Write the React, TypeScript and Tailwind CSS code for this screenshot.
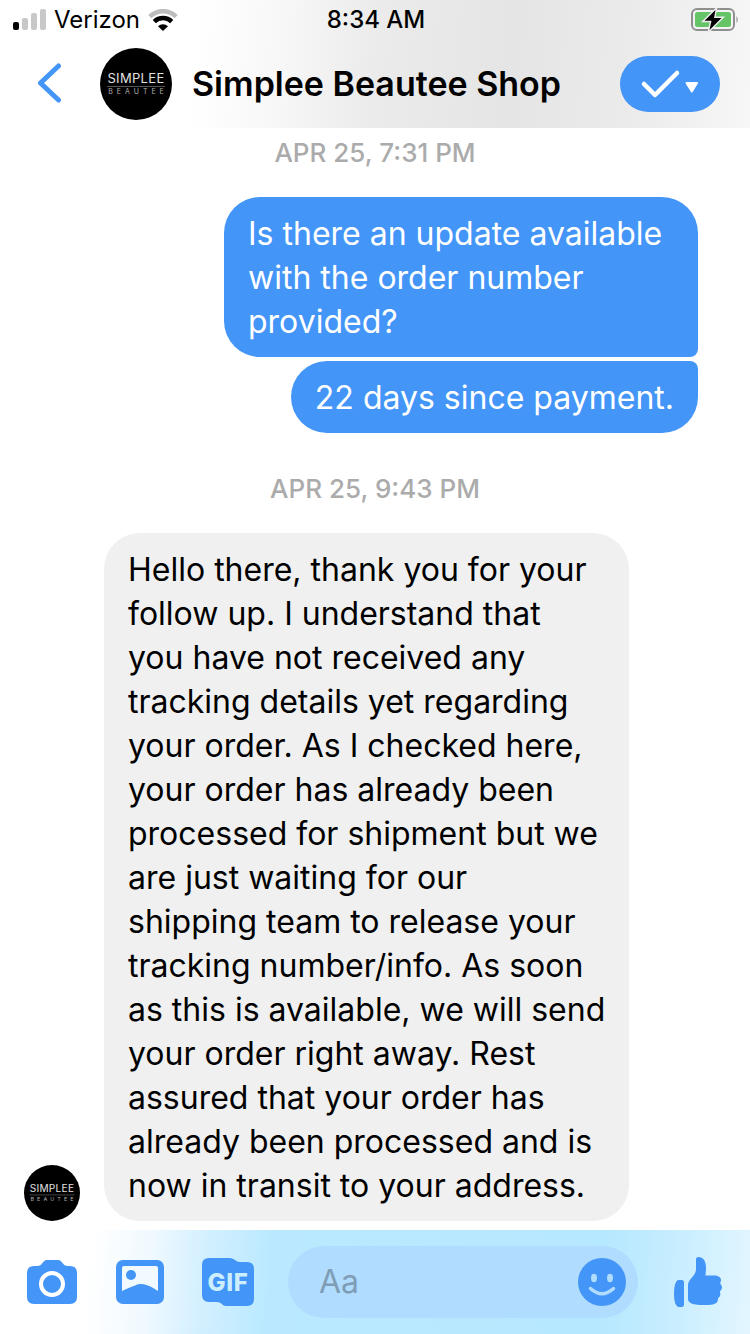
import { clsx } from "clsx";

function Avatar({ className }: { className: string }) {
  return (
    <svg viewBox="0 0 72 72" className={clsx("shrink-0", className)} role="img" aria-label="Simplee Beautee">
      <circle cx="36" cy="36" r="36" fill="#000" />
      <text x="36" y="35" textAnchor="middle" fill="#e0e0e0" fontSize="13" className="font-['Inter',sans-serif] tracking-wide">SIMPLEE</text>
      <path d="M7 38.5H65" stroke="#555" strokeWidth="1" />
      <text x="38" y="46" textAnchor="middle" fill="#b0b0b0" fontSize="7" className="font-['Inter',sans-serif] tracking-[4px]">BEAUTEE</text>
    </svg>
  );
}

function Signal() {
  return (
    <svg viewBox="0 0 33 22" className="h-[22px] w-[33px]" aria-hidden="true">
      <rect x="0" y="13" width="6" height="8" rx="2" fill="#000" />
      <rect x="9" y="9" width="6" height="12" rx="2" fill="#c8c8c8" />
      <rect x="18" y="4" width="6" height="17" rx="2" fill="#c8c8c8" />
      <rect x="27" y="0" width="6" height="21" rx="2" fill="#c8c8c8" />
    </svg>
  );
}

function Wifi() {
  return (
    <svg viewBox="0 0 30 22" className="h-[22px] w-[30px]" fill="none" aria-hidden="true">
      <path d="M1.8 7.6A19 19 0 0 1 28.2 7.6" stroke="#bdbdbd" strokeWidth="4.4" />
      <path d="M6.3 12.6A12.4 12.4 0 0 1 23.7 12.6" stroke="#000" strokeWidth="4.4" />
      <path d="M10 17.2a7.2 7.2 0 0 1 10 0L15 22z" fill="#000" />
    </svg>
  );
}

function Battery() {
  return (
    <svg viewBox="0 0 48 24" className="h-6 w-12" fill="none" aria-hidden="true">
      <rect x="1" y="1" width="42" height="21" rx="5" stroke="#8f8f8f" strokeWidth="2" />
      <rect x="4" y="4" width="36" height="15" rx="2.5" fill="#65c466" />
      <path d="M45.5 8q2.5 3.5 0 7z" fill="#8f8f8f" />
      <path d="M24.5 2 13.5 12.7h7L18.5 22 30.5 10h-7.5z" fill="#000" stroke="#ececec" strokeWidth="3" paintOrder="stroke" />
    </svg>
  );
}

function Stamp({ children }: { children: string }) {
  return <time className="block text-center text-[26px] leading-[32px] font-medium text-[#ababab]">{children}</time>;
}

const iconButton = "shrink-0 cursor-pointer text-[#4395f7]";
const bubble = "rounded-[36px] px-6 pt-[15px] pb-[13px] whitespace-pre";

const question = ["Is there an update available", "with the order number", "provided?"];

const reply = [
  "Hello there, thank you for your",
  "follow up. I understand that",
  "you have not received any",
  "tracking details yet regarding",
  "your order. As I checked here,",
  "your order has already been",
  "processed for shipment but we",
  "are just waiting for our",
  "shipping team to release your",
  "tracking number/info. As soon",
  "as this is available, we will send",
  "your order right away. Rest",
  "assured that your order has",
  "already been processed and is",
  "now in transit to your address.",
];

export default function App() {
  return (
    <div className="flex min-h-screen flex-col bg-white font-['Inter',sans-serif] text-black">
      <header className="bg-[linear-gradient(95deg,#fff_26%,#f7f7f7_38%,#ebebeb_50%,#e5e5e6_68%,#ebebeb_84%,#f7f7f7)]">
        <div className="grid h-10 grid-cols-3 items-center pr-[11px] pl-[13px] text-2xl">
          <div className="flex items-center gap-2">
            <Signal />
            <span>Verizon</span>
            <Wifi />
          </div>
          <span className="text-center font-medium">8:34 AM</span>
          <div className="flex justify-end">
            <Battery />
          </div>
        </div>

        <div className="flex h-[88px] items-center pr-[30px] pl-9">
          <button type="button" aria-label="Back" className={iconButton}>
            <svg viewBox="0 0 28 42" className="h-[42px] w-7" fill="none" stroke="currentColor" strokeWidth="5" strokeLinecap="round" strokeLinejoin="round">
              <path d="M22.5 3 4.5 20 22.5 37" />
            </svg>
          </button>
          <Avatar className="ml-9 size-[72px]" />
          <h1 className="ml-5 flex-1 text-[34px] leading-[44px] font-semibold whitespace-nowrap">Simplee Beautee Shop</h1>
          <button type="button" aria-label="Mark as done" className="h-14 w-[100px] shrink-0 cursor-pointer rounded-full bg-[#4395f7]">
            <svg viewBox="0 0 100 56" className="h-14 w-[100px]" fill="none">
              <path d="M24 28 35 39 57 17" stroke="#fff" strokeWidth="4.5" strokeLinecap="round" strokeLinejoin="round" />
              <path d="M66.5 27H77L71.8 35.5z" fill="#fff" stroke="#fff" strokeWidth="2" strokeLinejoin="round" />
            </svg>
          </button>
        </div>
      </header>

      <main className="flex flex-1 flex-col py-[9px] text-[32px] leading-[44px]">
        <Stamp>APR 25, 7:31 PM</Stamp>

        <div className="mt-7 flex flex-col items-end gap-1 pr-[52px] text-white">
          <p className={clsx(bubble, "w-[474px] rounded-br-lg bg-[#4395f7]")}>{question.join("\n")}</p>
          <p className={clsx(bubble, "rounded-tr-lg bg-[#4395f7]")}>22 days since payment.</p>
        </div>

        <div className="mt-10">
          <Stamp>APR 25, 9:43 PM</Stamp>
        </div>

        <div className="mt-7 flex items-end gap-6 pl-6">
          <Avatar className="size-14" />
          <p className={clsx(bubble, "w-[525px] bg-[#f0f0f0]")}>{reply.join("\n")}</p>
        </div>
      </main>

      <footer className="flex h-[104px] items-center bg-[linear-gradient(95deg,#fff_12%,#f0f9ff_20%,#d4f0ff_27%,#bae9ff_36%,#b6e8ff_80%,#c9eeff_90%,#e3f6ff)] pr-7 pl-[27px]">
        <button type="button" aria-label="Camera" className={iconButton}>
          <svg viewBox="0 0 50 44" className="h-11 w-[50px]" fill="currentColor">
            <path d="M7 6h3c3 0 4-1 5.5-3S18 0 20 0h11c2 0 3 1 4.5 3S38 6 41 6h2q7 0 7 7v24q0 7-7 7H7q-7 0-7-7V13q0-7 7-7z" />
            <circle cx="25" cy="24" r="11" fill="none" stroke="#fff" strokeWidth="4" />
          </svg>
        </button>
        <button type="button" aria-label="Photos" className={clsx(iconButton, "ml-[39px]")}>
          <svg viewBox="0 0 48 44" className="h-11 w-12" fill="currentColor">
            <rect width="48" height="44" rx="7" />
            <path d="M6 8q0-2 2-2h32q2 0 2 2v23Q33 25 27.5 24.3 23 23.5 19 25.5 12 28 6 31z" fill="#f0faff" />
            <circle cx="15" cy="15" r="5" />
          </svg>
        </button>
        <button type="button" aria-label="GIF" className={clsx(iconButton, "ml-[38px]")}>
          <svg viewBox="0 0 52 48" className="h-12 w-[52px]" fill="currentColor">
            <path d="M7 0h21c4 0 6 4 10 4h7q7 0 7 7v30q0 7-7 7H24c-4 0-4-4-9-4H7q-7 0-7-7V7q0-7 7-7z" />
            <text x="26" y="33" textAnchor="middle" fill="#cceeff" fontSize="24" fontWeight="800" className="tracking-wide">GIF</text>
          </svg>
        </button>

        <div className="ml-[34px] flex h-[72px] min-w-0 flex-1 items-center rounded-full bg-[#b0dcff] pr-3 pl-[31px]">
          <input aria-label="Message" placeholder="Aa" className="min-w-0 flex-1 bg-transparent text-[32px] outline-none placeholder:text-[#7f9db5]" />
          <button type="button" aria-label="Emoji" className={iconButton}>
            <svg viewBox="0 0 48 48" className="size-12" fill="currentColor">
              <circle cx="24" cy="24" r="24" />
              <ellipse cx="16" cy="20" rx="3" ry="4.2" fill="#b0dcff" />
              <ellipse cx="32" cy="20" rx="3" ry="4.2" fill="#b0dcff" />
              <path d="M12.5 30.5Q24 41 35.5 30.5" fill="none" stroke="#b0dcff" strokeWidth="3.5" strokeLinecap="round" />
            </svg>
          </button>
        </div>

        <button type="button" aria-label="Like" className={clsx(iconButton, "ml-9")}>
          <svg viewBox="0 0 48 50" className="h-[50px] w-12" fill="currentColor">
            <path d="M4 23h3.5q2.5 0 2.5 2.5v22Q10 50 7.5 50H4Q0 48 0 36.5T4 23z" />
            <path d="M22 2Q22 0 24.5 0C30 0 32 5 32 11c0 3-.5 5-.5 7.5h8c5 0 7.5 2 7.5 4.5 0 1.8-.8 2.6-.8 3.3 0 1 1.8 1.7 1.8 4.2s-1.8 3-2 4 .6 1.6.2 3.7-2 2.3-2.2 3.3.2 1.3-.5 2.8C42.5 47 39 48 33 48c-8 0-12-.4-15.5-1.6Q14 45 14 42V28c0-6 8-9 8-16z" />
          </svg>
        </button>
      </footer>
    </div>
  );
}
